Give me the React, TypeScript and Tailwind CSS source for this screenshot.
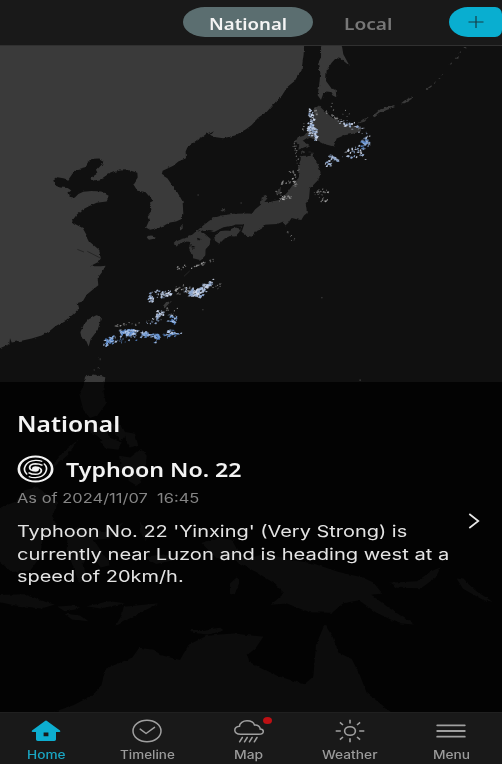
import { useLayoutEffect, useRef, useState, type ReactNode } from "react";

/** Single line of text widened horizontally to fill exactly `width` pixels. */
function Wide({ width, children }: { width: number; children: string }) {
  const ref = useRef<HTMLSpanElement>(null);
  const [scale, setScale] = useState(1.2);
  useLayoutEffect(() => {
    if (ref.current) setScale(width / ref.current.offsetWidth);
  }, [width, children]);
  return (
    <span className="block text-left" style={{ width }}>
      <span
        ref={ref}
        className="inline-block origin-left whitespace-pre"
        style={{ transform: `scaleX(${scale})` }}
      >
        {children}
      </span>
    </span>
  );
}

// Seeded generator so that the rain echoes are identical on every render.
function makeRandom(seed: number) {
  let s = seed;
  return () => {
    s = (s * 1664525 + 1013904223) % 4294967296;
    return s / 4294967296;
  };
}

// x1, y1, x2, y2, spread, count, largest cell, colours
type Band = [number, number, number, number, number, number, number, string[]];
const pale = ["#b9c9e2", "#d3dced", "#8fa9d0"];
const blue = ["#6f9bd8", "#92b4e2", "#5383c8", "#b9cdec"];
const grey = ["#8c8c8c", "#b5b5b5", "#666666"];
const bands: Band[] = [
  [936, 328, 930, 398, 16, 64, 10, pale],
  [930, 375, 950, 408, 16, 38, 11, pale],
  [945, 325, 948, 345, 8, 8, 9, grey],
  [975, 330, 1025, 360, 6, 15, 8, grey],
  [990, 320, 1055, 345, 16, 7, 5, grey],
  [1020, 362, 1080, 378, 12, 26, 11, pale],
  [1075, 380, 1108, 405, 14, 12, 7, pale],
  [1090, 422, 1108, 428, 14, 27, 13, blue],
  [1080, 435, 1095, 445, 10, 8, 10, blue],
  [1030, 458, 1070, 458, 15, 14, 11, pale],
  [1055, 440, 1098, 470, 14, 16, 11, pale],
  [988, 463, 1018, 482, 6, 18, 12, pale],
  [975, 495, 998, 482, 11, 15, 12, pale],
  [910, 368, 910, 392, 5, 6, 6, grey],
  [880, 425, 898, 510, 10, 18, 6, grey],
  [870, 500, 888, 550, 12, 22, 7, grey],
  [845, 545, 892, 548, 7, 18, 8, grey],
  [825, 575, 870, 592, 8, 16, 7, grey],
  [838, 596, 854, 590, 5, 9, 9, ["#c5c5c5", "#999999"]],
  [945, 580, 985, 572, 12, 20, 8, grey],
  [965, 595, 982, 600, 8, 9, 7, grey],
  [865, 690, 885, 730, 10, 8, 5, grey],
  [535, 808, 558, 792, 7, 10, 7, grey],
  [575, 800, 645, 778, 5, 22, 8, grey],
  [448, 888, 460, 902, 12, 16, 12, pale],
  [455, 885, 512, 876, 14, 22, 10, pale],
  [482, 887, 512, 876, 9, 25, 12, pale],
  [525, 870, 570, 863, 14, 30, 9, [...grey, "#b9c9e2"]],
  [572, 880, 605, 872, 14, 48, 15, pale],
  [598, 868, 635, 850, 13, 44, 14, pale],
  [640, 862, 675, 850, 8, 9, 6, grey],
  [468, 945, 495, 937, 11, 22, 12, pale],
  [440, 970, 485, 950, 12, 14, 9, pale],
  [510, 955, 530, 965, 13, 27, 12, blue],
  [495, 925, 530, 935, 15, 11, 7, grey],
  [332, 978, 380, 970, 4, 13, 7, grey],
  [385, 972, 450, 965, 7, 8, 6, grey],
  [360, 1000, 400, 996, 12, 52, 14, blue],
  [395, 994, 415, 988, 7, 15, 11, pale],
  [314, 1032, 345, 1013, 12, 44, 13, blue],
  [350, 1018, 410, 1004, 13, 27, 10, blue],
  [422, 1000, 478, 1008, 9, 52, 12, blue],
  [462, 1010, 478, 1012, 7, 12, 11, blue],
  [492, 1000, 530, 1000, 10, 34, 12, blue],
  [525, 1000, 548, 999, 3, 7, 8, blue],
  [462, 1022, 468, 1026, 3, 3, 8, blue],
];

function RainEchoes() {
  const random = makeRandom(77);
  const cells: ReactNode[] = [];
  bands.forEach(([x1, y1, x2, y2, spread, count, size, colours], b) => {
    for (let i = 0; i < count; i++) {
      const t = random();
      const cx = x1 + (x2 - x1) * t + (random() - 0.5) * spread;
      const cy = y1 + (y2 - y1) * t + (random() + random() - 1) * spread * 1.2;
      const w = 2 + random() * (size - 2);
      const h = 2 + random() * (size - 2) * 0.6;
      const colour = colours[Math.floor(random() * colours.length)];
      const points = [
        `${cx - w / 2},${cy + h * 0.3}`,
        `${cx - w * 0.1},${cy - h / 2}`,
        `${cx + w / 2},${cy - h * 0.3}`,
        `${cx + w * 0.2},${cy + h / 2}`,
      ].join(" ");
      cells.push(<polygon key={`${b}-${i}`} points={points} fill={colour} opacity={0.9} />);
    }
  });
  return <g>{cells}</g>;
}

function WeatherMap() {
  return (
    <svg viewBox="0 135 1506 2001" className="absolute inset-0 h-full w-full" preserveAspectRatio="none">
      <defs>
        <filter id="coast" x="-5%" y="-5%" width="110%" height="110%" colorInterpolationFilters="sRGB">
          <feTurbulence type="fractalNoise" baseFrequency="0.07" numOctaves={3} seed={4} result="n" />
          <feDisplacementMap in="SourceGraphic" in2="n" scale={9} xChannelSelector="R" yChannelSelector="G" />
        </filter>
      </defs>
      <rect y="135" width="1506" height="2001" fill="#101010" />
      <g filter="url(#coast)">
        <g fill="#3a3a3a">
          {/* Mainland and the Korean peninsula */}
          <path d="M-40 100H914L911 160L905 205L884 240L862 258L845 285L828 302L800 333L775 350L755 372L738 385L705 404L670 412L648 409L632 403L642 391L622 402L628 392L608 408L590 418L562 440L557 452L558 472L535 482L520 495L488 510L485 522L502 532L518 556L537 583L548 602L550 640L545 655L528 662L510 665L495 673L478 678L460 685L450 687L438 680L447 660L443 648L455 632L450 605L460 600L446 585L436 574L412 570L400 550L413 530L412 516L388 508L360 509L345 513L322 522L302 535L278 540L274 530L292 518L288 510L306 490L310 480L298 473L282 474L264 484L255 499L228 506L218 518L205 537L190 532L172 529L160 540L163 553L180 560L203 562L214 569L205 576L209 588L224 591L235 580L250 573L275 571L304 572L327 586L320 602L290 606L268 616L247 627L230 642L215 662L225 670L248 682L258 700L270 724L298 748L302 771L295 784L270 797L302 797L317 795L306 815L293 832L295 854L277 868L260 882L248 903L230 908L235 925L220 941L192 963L166 977L148 992L125 1005L95 1014L68 1020L35 1026L30 1013L28 1030L0 1043L-40 1055Z" />
          {/* Sakhalin */}
          <path d="M964 100H1020L1030 160L1049 195L1025 175L1008 171L995 185L980 208L978 240L994 262L1007 266L1009 289L998 284L991 273L980 272L970 278L963 297L953 283L958 250L961 215L954 190L963 172Z" />
          {/* Kuril islands */}
          <path d="M1118 345L1140 326L1160 319L1183 312L1184 319L1160 327L1138 338L1124 349ZM1203 307L1222 292L1236 287L1235 294L1214 307ZM1277 266L1294 253L1296 256L1281 268ZM1301 246l6 -3l-3 6ZM1312 232l7 0l-4 4ZM1323 220l5 1l-4 3ZM1349 191l5-7 2 5ZM1367 173l10-12-2 12ZM1378 158l3-8 2 4ZM1393 138l10 0-5 5Z" />
          {/* Jeju, Tsushima, Taiwan, Luzon */}
          <path d="M440 710L450 704L467 707L463 714L447 717ZM538 683L548 669L548 683L541 689ZM289 944L303 948L299 968L293 988L272 1016L266 1038L258 1020L245 1012L241 995L252 971L266 956ZM255 1128L280 1122L316 1130L310 1170L318 1210L293 1244L270 1253L250 1228L238 1180L251 1155Z" />
          <path d="M222 991h5v3h-5ZM281 1106h4v4h-4ZM293 1100h4v4h-4ZM299 1073h3v6h-3ZM488 918L498 905L516 901L505 911L494 923Z" />
        </g>
        <g fill="#353535">
          {/* Hokkaido */}
          <path d="M957 314L968 325L988 343L1014 357L1040 374L1083 376L1083 391L1059 399L1033 403L1010 413L1001 437L975 430L948 416L925 409L908 420L930 433L914 439L895 447L898 431L887 423L893 409L913 403L922 392L921 377L938 367L946 355L940 325ZM1071 368L1090 354L1105 350L1088 364Z" />
          {/* Honshu */}
          <path d="M903 455L914 451L918 466L926 455L940 455L943 477L954 491L962 515L955 537L940 553L930 562L927 593L917 609L921 637L912 644L904 658L893 656L875 652L865 666L856 674L850 662L832 670L792 672L785 684L771 691L758 708L742 706L724 693L726 678L696 675L667 681L650 692L626 688L610 694L594 687L615 670L637 653L664 644L700 639L743 638L756 639L765 626L783 611L785 590L801 584L802 593L793 604L813 603L841 597L863 574L879 551L896 531L894 500L902 477Z" />
          {/* Shikoku and Kyushu */}
          <path d="M642 704L661 691L687 686L704 680L722 684L718 694L706 707L690 706L673 714L658 729L645 720ZM553 713L574 704L590 690L612 697L632 715L629 732L617 746L616 764L603 779L579 773L574 760L567 741L571 724L548 722L533 735L520 731L529 722L546 715ZM828 575l14-15-1 15-9 8ZM661 630l13-9 2 7-8 4ZM593 775l10 1-3 5Z" />
        </g>
        <g fill="#101010">
          <path d="M566 733l10-2-2 7-8-1ZM900 460l14-4 25-1-4 7-30 4ZM574 740l12-3-7 8ZM593 711l9 4-5 5Z" />
        </g>
        {/* Southern islands, New Guinea and Australia */}
        <g fill="#3d3d3d">
          <path d="M265 1270l27 7 28 12 7 23-19 9-20-18-21-9ZM334 1272l30 2 14 27-14 21-18-20ZM376 1295l29 5 9 33-22 8-14-20ZM300 1323l30-11 35 14-10 22-40-5ZM357 1366l34 5 32-25 17 19-4 53-25 38-25-15-4-31-28 12 8-30ZM155 1396l36-42 42-35-28 43-43 38Z" />
          <path d="M-20 1530L46 1504L74 1470L110 1461L140 1479L172 1510L156 1550L171 1572L128 1614L120 1670L91 1711L35 1715L-20 1667ZM203 1602L233 1581L311 1594L370 1567L333 1614L281 1619L310 1661L332 1694L302 1702L269 1653L248 1695L265 1735L237 1747L213 1682L200 1650ZM419 1563l17 28 20 4-19 27-12-18ZM430 1670l65-8 24 18-50 11ZM-20 1785L74 1782L142 1807L164 1813L125 1825L42 1815L-20 1802ZM172 1819l51-3 17 9-45 9ZM260 1818l70-15 45 6-73 16ZM371 1820L478 1809L410 1843L346 1878L365 1845ZM192 1840l52 7 21 16-49-5Z" />
          <path d="M604 1628L658 1611L696 1620L714 1654L748 1674L799 1659L861 1676L940 1690L1016 1715L1088 1732L1120 1747L1147 1780L1114 1784L1162 1820L1242 1873L1196 1869L1128 1837L1077 1800L1030 1809L996 1838L927 1836L861 1810L812 1814L853 1779L820 1748L774 1718L702 1681L651 1675ZM1168 1748L1251 1743L1292 1714L1322 1701L1307 1732L1263 1764L1190 1763ZM1370 1735l20 3 40 36 48 31-27-5-62-34ZM690 1750l20-18 11 8-17 42-14-4Z" />
          <path d="M120 2150L220 2116L274 2088L303 2060L317 2006L397 1972L418 1943L458 1949L488 1966L540 1980L566 1934L619 1908L660 1903L702 1900L790 1910L767 1944L742 1965L747 1985L833 2028L913 2053L940 2029L948 1935L974 1872L999 1912L1015 1957L1055 1977L1079 2024L1100 2078L1190 2150ZM570 1890l40 0 51-7 11 9-49 11-44-5Z" />
        </g>
      </g>
      <g stroke="#101010" strokeLinecap="round" strokeLinejoin="round" fill="none">
        {/* Seto inland sea */}
        <path strokeWidth="6" d="M606 693L625 696L642 697L660 688L688 683L708 674L726 674" />
        <path strokeWidth="4" d="M672 687L690 688M624 700L634 706M724 690L730 672" />
      </g>
      <g stroke="#262626" strokeWidth="3" fill="none">
        <path d="M232 746l20 8M262 752l39 20M552 827l17-16" />
      </g>
      <g fill="#3b3b3b">
        <path d="M592 581h5v3h-5ZM721 605h5v3h-5ZM963 890h5v3h-5ZM606 926h5v3h-5ZM1078 1137h5v4h-5Z" />
      </g>
      <RainEchoes />
    </svg>
  );
}

function TyphoonIcon() {
  return (
    <svg viewBox="-18 -18 36 36" preserveAspectRatio="none" className="h-7 w-[37px]" fill="none" stroke="#f3f3f3">
      <circle r="16.2" strokeWidth="2.6" />
      <circle r="3.4" fill="#f3f3f3" stroke="none" />
      {["rotate(0)", "rotate(180)"].map((turn) => (
        <g key={turn} transform={turn} strokeLinecap="round">
          <path d="M-2.5 2.2C-7.5 0 -6.5 -6.6 0 -6.8C2.5 -6.8 4.6 -6.2 6.2 -5" strokeWidth="1.8" />
          <path d="M-8.5 6.5C-13.5 0 -9.5 -10.6 0 -11.2C2.5 -11.3 4.5 -10.9 6 -10" strokeWidth="1.6" />
        </g>
      ))}
    </svg>
  );
}

function HomeIcon() {
  return (
    <svg viewBox="0 0 30 22" className="h-[22px] w-[30px]">
      <path
        fill="#0daed0"
        fillRule="evenodd"
        d="M14 .9Q15 .3 16 .9L29 10.6Q30 11.8 28.5 11.9H25V19.6Q25 21 23.3 21H6.7Q5 21 5 19.6V11.9H1.5Q0 11.8 1 10.6ZM12.6 12.4V16.2H17.4V12.4Z"
      />
    </svg>
  );
}

function TimelineIcon() {
  return (
    <svg viewBox="0 0 30 24" className="h-6 w-[30px]" fill="none" stroke="#a0a0a0" strokeWidth="1.5" strokeLinecap="round" strokeLinejoin="round">
      <ellipse cx="15" cy="12" rx="14" ry="10.8" />
      <path d="M8.2 10.1L14.1 14.5L22.5 8.4" />
    </svg>
  );
}

function RainIcon() {
  return (
    <svg viewBox="0 0 30 23" className="h-[23px] w-[30px]" fill="none" stroke="#a0a0a0" strokeWidth="1.5" strokeLinecap="round">
      <path d="M6.5 14.2C2.9 14.2 .8 12.6 .8 10.2S3 6.4 5.5 6.2C5.6 3 9 .8 13 .8C17 .8 19.8 2.6 20.5 5.1C23.9 4.8 26.3 6.6 26.1 8.9C28.2 9.1 29.3 10.2 29.3 11.4C29.3 13.2 27.5 14.2 25 14.2Z" />
      <path d="M8.3 17.5L5.6 21.8M13.2 17.5L10.5 21.8M18.1 17.5L15.4 21.8M23 17.5L20.3 21.8" />
    </svg>
  );
}

function SunIcon() {
  return (
    <svg viewBox="0 0 30 24" className="h-6 w-[30px]" fill="none" stroke="#a0a0a0" strokeWidth="1.6">
      <ellipse cx="15" cy="12" rx="5.4" ry="4.3" />
      <path d="M15 .7V4.5M15 19.3V23.2M.7 12H5.8M24.2 12H29.3M4.9 3.4L8 6M22 18L25.1 20.6M25.1 3.4L22 6M8 18L4.9 20.6" />
    </svg>
  );
}

function MenuIcon() {
  return (
    <svg viewBox="0 0 30 14" className="h-3.5 w-[30px]" stroke="#a0a0a0" strokeWidth="1.8" strokeLinecap="round">
      <path d="M1.2 1.3H28.8M1.2 7H28.8M1.2 12.7H28.8" />
    </svg>
  );
}

const tabs = [
  { label: "Home", width: 38, icon: <HomeIcon />, active: true },
  { label: "Timeline", width: 55, icon: <TimelineIcon /> },
  { label: "Map", width: 29, icon: <RainIcon />, badge: true },
  { label: "Weather", width: 55, icon: <SunIcon /> },
  { label: "Menu", width: 37, icon: <MenuIcon /> },
];

const heading = "font-['Noto_Sans','Open_Sans',sans-serif] font-semibold";

export default function App() {
  return (
    <div className="flex h-[764px] w-[502px] flex-col overflow-hidden bg-[#101010] font-['Inter','Liberation_Sans',sans-serif]">
      <header className="flex h-[45px] shrink-0 items-start bg-[#191919] pt-[7px]">
        <button className={`ml-[183px] flex h-[30px] w-[130px] items-center justify-center rounded-[22px/15px] bg-[#5b6e70] pt-[3px] text-base text-[#f4f4f4] ${heading}`}>
          <Wide width={78}>National</Wide>
        </button>
        <button className={`ml-[31px] flex h-[30px] items-center pt-[3px] text-base text-[#777777] ${heading}`}>
          <Wide width={49}>Local</Wide>
        </button>
        <button aria-label="Add" className="ml-auto flex h-[30px] w-[53px] items-center justify-center rounded-l-[19px_15px] rounded-r-[7px] bg-[#09aed0]">
          <svg viewBox="0 0 16 12" className="h-3 w-4" stroke="#173c45" strokeWidth="1.2">
            <path d="M.5 6H15.5M8 0V12" />
          </svg>
        </button>
      </header>

      <main className="relative flex h-[667px] shrink-0 flex-col justify-end border-t border-[#303030]">
        <WeatherMap />
        <section className="relative flex h-[330px] items-start bg-black/80 px-[17px] pt-[26px]">
          <div className="flex-1">
            <h1 className={`text-[22px] leading-[30px] text-[#f3f3f3] ${heading}`}>
              <Wide width={103}>National</Wide>
            </h1>
            <div className="mt-[17px] flex h-7 items-center gap-3">
              <TyphoonIcon />
              <h2 className={`pt-0.5 text-[20px] leading-7 text-[#f3f3f3] ${heading}`}>
                <Wide width={176}>Typhoon No. 22</Wide>
              </h2>
            </div>
            <p className="mt-[5px] text-[13.5px] leading-5 text-[#858585]">
              <Wide width={183}>As of 2024/11/07  16:45</Wide>
            </p>
            <div className="mt-3 text-base leading-[22.7px] text-[#e4e4e4]">
              <Wide width={390}>Typhoon No. 22 'Yinxing' (Very Strong) is</Wide>
              <Wide width={432}>currently near Luzon and is heading west at a</Wide>
              <Wide width={167}>speed of 20km/h.</Wide>
            </div>
          </div>
          <svg viewBox="0 0 12 16" className="mt-[105px] mr-[5px] h-4 w-3 shrink-0" fill="none" stroke="#e8e8e8" strokeWidth="1.7">
            <path d="M1.3 1L10.3 8L1.3 15" />
          </svg>
        </section>
      </main>

      <nav className="-ml-[5px] flex h-[52px] w-[507px] shrink-0 border-t border-[#202020] bg-[#191919]">
        {tabs.map((tab) => (
          <button
            key={tab.label}
            className={`flex flex-1 flex-col items-center pt-[5px] text-[11.5px] leading-4 font-medium ${tab.active ? "text-[#1aa6c3]" : "text-[#9b9b9b]"}`}
          >
            <span className="relative flex h-[26px] items-center">
              {tab.icon}
              {tab.badge && <span className="absolute -top-px -right-[8px] h-[7px] w-[9px] rounded-[50%] bg-[#bd1014]" />}
            </span>
            <span className="mt-[3px]">
              <Wide width={tab.width}>{tab.label}</Wide>
            </span>
          </button>
        ))}
      </nav>
    </div>
  );
}
